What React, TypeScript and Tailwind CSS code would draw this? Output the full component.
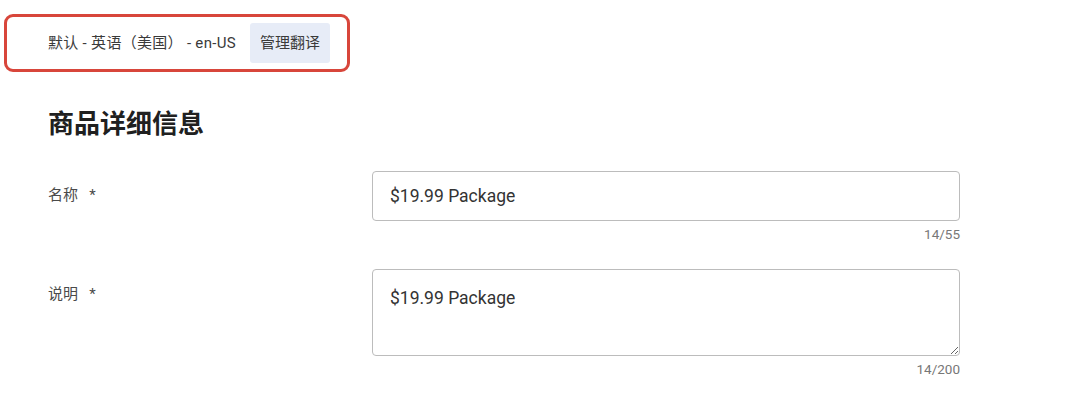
import { useState } from 'react';

const font = { fontFamily: 'Roboto, "Noto Sans CJK SC", sans-serif' };

export default function App() {
  const [name, setName] = useState('$19.99 Package');
  const [desc, setDesc] = useState('$19.99 Package');

  return (
    <div className="w-[1080px] h-[399px] bg-white overflow-hidden text-[#3c3c3c]" style={font}>
      {/* 语言栏 */}
      <div className="pt-[14px] pl-[4px]">
        <div className="inline-flex items-center h-[58px] border-[3px] border-[#d8463b] rounded-[9px] pl-[41px] pr-[17px]">
          <span className="text-[15px] tracking-[0.3px] text-[#3a3a3a] mr-[14px]">默认 - 英语（美国） - en-US</span>
          <button className="h-[40px] px-[10px] rounded-[3px] bg-[#e7ecf7] text-[15px] text-[#3a3a3a]">管理翻译</button>
        </div>
      </div>

      <div className="pl-[48px] pt-[36px]">
        <h2 className="text-[26px] leading-[32px] font-bold text-[#202020]">商品详细信息</h2>

        {/* 名称 */}
        <div className="flex mt-[31px]">
          <div className="w-[324px] pt-[14px] text-[15px] leading-[20px] text-[#4a4a4a]">名称&nbsp;&nbsp;&nbsp;*</div>
          <div className="w-[588px]">
            <input
              value={name}
              onChange={(e) => setName(e.target.value)}
              className="w-full h-[50px] border border-[#bcbcbc] rounded-[4px] px-[17px] text-[17.5px] text-[#333] outline-none"
            />
            <div className="text-right text-[13.5px] leading-[16px] text-[#777] mt-[5px]">{name.length}/55</div>
          </div>
        </div>

        {/* 说明 */}
        <div className="flex mt-[27px]">
          <div className="w-[324px] pt-[15px] text-[15px] leading-[20px] text-[#4a4a4a]">说明&nbsp;&nbsp;&nbsp;*</div>
          <div className="w-[588px]">
            <textarea
              value={desc}
              onChange={(e) => setDesc(e.target.value)}
              className="block w-full h-[87px] border border-[#bcbcbc] rounded-[4px] px-[17px] pt-[17px] text-[17.5px] leading-[22px] text-[#333] outline-none resize-y"
            />
            <div className="text-right text-[13.5px] leading-[16px] text-[#777] mt-[5px]">{desc.length}/200</div>
          </div>
        </div>
      </div>
    </div>
  );
}
